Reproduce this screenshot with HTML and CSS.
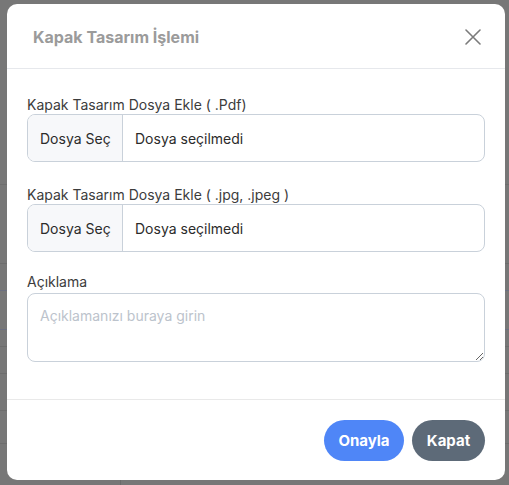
FILE: index.html
```html
<!DOCTYPE html>
<html lang="tr">
<head>
<meta charset="utf-8">
<title>Kapak Tasarım İşlemi</title>
<link rel="stylesheet" href="styles.css">
</head>
<body>
<div class="modal">
  <div class="modal-header">
    <h5 class="modal-title">Kapak Tasarım İşlemi</h5>
    <button class="close-btn" type="button" aria-label="Kapat">
      <svg width="16" height="16" viewBox="0 0 16 16"><path d="M1 1 L15 15 M15 1 L1 15" stroke="#7b7b7b" stroke-width="1.6" fill="none" stroke-linecap="round"/></svg>
    </button>
  </div>
  <div class="modal-body">
    <div class="field first">
      <label class="field-label">Kapak Tasarım Dosya Ekle ( .Pdf)</label>
      <div class="file-input">
        <span class="file-btn">Dosya Seç</span>
        <span class="file-name">Dosya seçilmedi</span>
      </div>
    </div>
    <div class="field">
      <label class="field-label">Kapak Tasarım Dosya Ekle ( .jpg, .jpeg )</label>
      <div class="file-input">
        <span class="file-btn">Dosya Seç</span>
        <span class="file-name">Dosya seçilmedi</span>
      </div>
    </div>
    <div class="field last">
      <label class="field-label">Açıklama</label>
      <textarea class="textarea" placeholder="Açıklamanızı buraya girin"></textarea>
    </div>
  </div>
  <div class="modal-footer">
    <button class="btn btn-primary" type="button">Onayla</button>
    <button class="btn btn-secondary" type="button">Kapat</button>
  </div>
</div>
</body>
</html>
```
FILE: styles.css
```css
* { box-sizing: border-box; }
html, body { height: 100%; }
body {
  margin: 0;
  padding: 4px 4px 5px 7px;
  font-family: Inter, "Noto Sans", sans-serif;
  background-color: #777777;
  background-image:
    linear-gradient(#6e6e6e, #6e6e6e),
    linear-gradient(#6d6d6d, #6d6d6d),
    linear-gradient(#6b6f80, #6b6f80),
    linear-gradient(#6b6f80, #6b6f80),
    linear-gradient(#6d6d6d, #6d6d6d),
    linear-gradient(#6d6d6d, #6d6d6d),
    linear-gradient(#6d6d6d, #6d6d6d),
    linear-gradient(#6d6d6d, #6d6d6d),
    linear-gradient(#6b6b6b, #6b6b6b);
  background-size:
    100% 1px, 100% 1px, 100% 1px, 100% 1px, 100% 1px, 100% 1px, 100% 1px, 100% 1px, 1px 10px;
  background-position:
    0 184px, 0 263px, 0 290px, 0 329px, 0 346px, 0 373px, 0 410px, 0 443px, 120px 480px;
  background-repeat: no-repeat;
}
.modal {
  width: 498px;
  height: 476px;
  background: #ffffff;
  border-radius: 10px;
  display: flex;
  flex-direction: column;
}
.modal-header {
  height: 65px;
  border-bottom: 1px solid #e6e8ec;
  display: flex;
  align-items: center;
  justify-content: space-between;
  padding: 0 24px 0 26px;
  flex: none;
}
.modal-title {
  margin: 0;
  font-size: 16px;
  font-weight: 700;
  color: #9b9b9b;
  line-height: 20px;
  padding-top: 1px;
}
.close-btn {
  border: 0;
  background: none;
  padding: 0;
  width: 16px;
  height: 16px;
  display: flex;
  margin-top: 2px;
}
.modal-body {
  padding: 26px 20px 0 20px;
  height: 331px;
  border-bottom: 1px solid #e9e9e9;
  flex: none;
}
.field { margin-top: 23px; }
.field.first { margin-top: 0; }
.field.last { margin-top: 20px; }
.field-label {
  display: block;
  font-size: 14px;
  line-height: 19px;
  color: #3c3c3c;
}
.file-input {
  display: flex;
  height: 48px;
  border: 1px solid #c9d1da;
  border-radius: 8px;
  overflow: hidden;
  font-size: 14px;
  color: #2b2b2b;
}
.file-btn {
  width: 95px;
  background: #f7f8fa;
  border-right: 1px solid #c9d1da;
  display: flex;
  align-items: center;
  padding-left: 12px;
  flex: none;
}
.file-name {
  display: flex;
  align-items: center;
  padding-left: 12px;
}
.textarea {
  display: block;
  width: 100%;
  height: 69px;
  margin-top: 2px;
  border: 1px solid #c9d1da;
  border-radius: 8px;
  padding: 12px 12px;
  font-family: Inter, "Noto Sans", sans-serif;
  font-size: 14px;
  line-height: 20px;
  resize: vertical;
  outline: none;
}
.textarea::placeholder { color: #bcc3cc; }
.modal-footer {
  flex: 1;
  display: flex;
  align-items: center;
  justify-content: flex-end;
  gap: 8px;
  padding: 0 20px;
}
.btn {
  height: 41px;
  border: 0;
  border-radius: 21px;
  font-family: Inter, "Noto Sans", sans-serif;
  font-size: 15px;
  font-weight: 700;
  color: #ffffff;
}
.btn-primary { background: #4f86f7; width: 80px; padding: 0; }
.btn-secondary { background: #5d6a78; width: 73px; padding: 0; }
```
